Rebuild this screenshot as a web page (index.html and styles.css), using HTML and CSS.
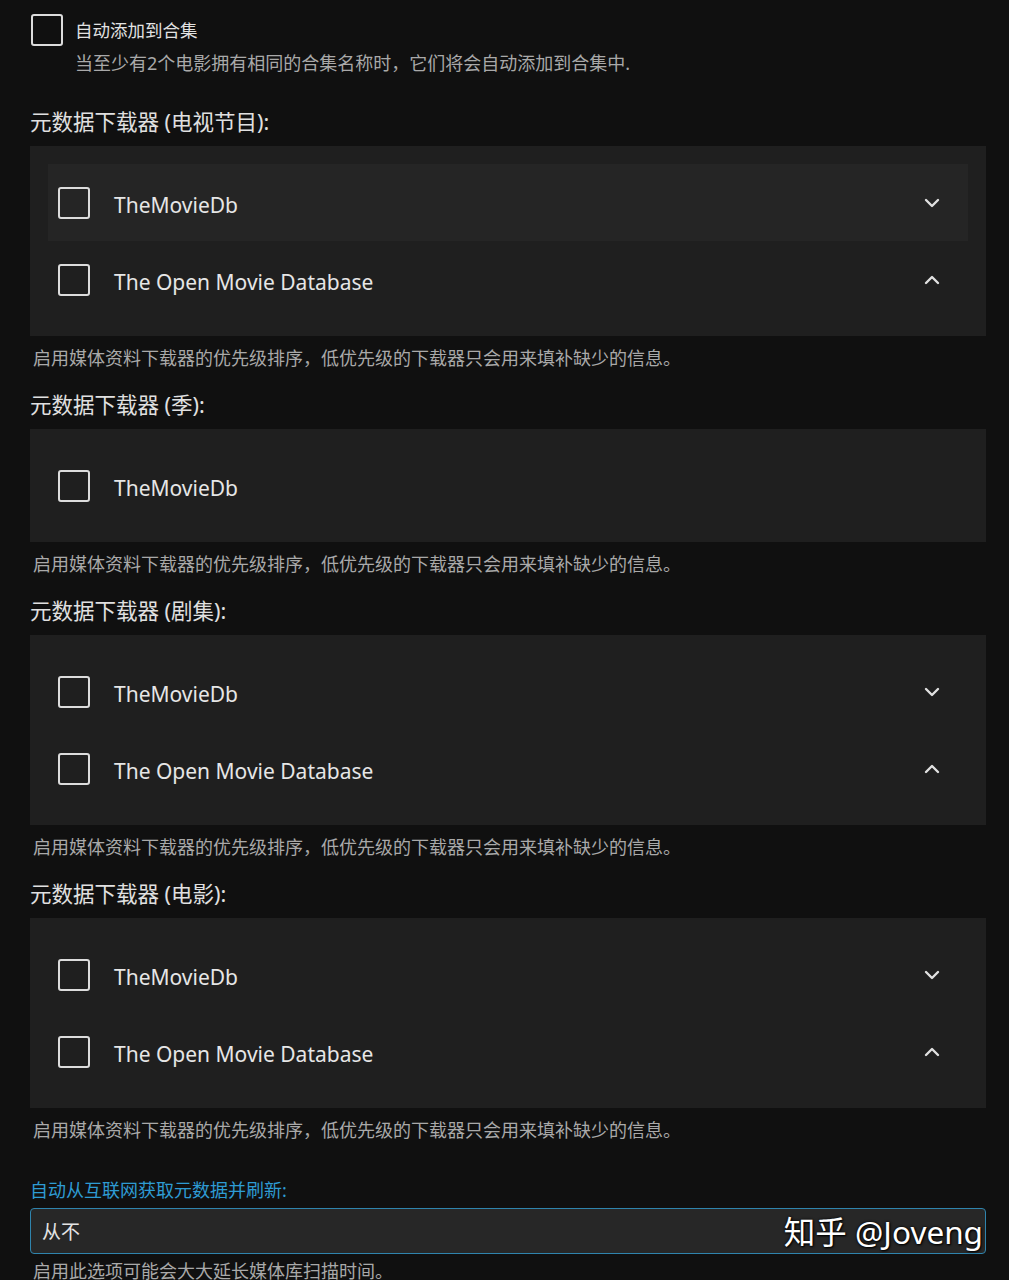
FILE: index.html
```html
<!DOCTYPE html>
<html lang="zh-CN">
<head>
  <meta charset="UTF-8">
  <meta name="viewport" content="width=device-width, initial-scale=1.0">
  <title>媒体库设置</title>
  <link rel="stylesheet" href="styles.css">
</head>
<body>
  <div class="page">
    <label class="check-row">
      <span class="box"></span>
      <span class="check-label">自动添加到合集</span>
    </label>
    <div class="check-desc">当至少有2个电影拥有相同的合集名称时，它们将会自动添加到合集中.</div>

    <div class="section">
      <h3 class="heading">元数据下载器 (电视节目):</h3>
      <div class="panel">
        <div class="item focused">
          <span class="box"></span>
          <span class="item-name">TheMovieDb</span>
          <svg class="chev" viewBox="0 0 16 10"><polyline points="2,2 8,8 14,2"/></svg>
        </div>
        <div class="item">
          <span class="box"></span>
          <span class="item-name">The Open Movie Database</span>
          <svg class="chev" viewBox="0 0 16 10"><polyline points="2,8 8,2 14,8"/></svg>
        </div>
      </div>
      <div class="help">启用媒体资料下载器的优先级排序，低优先级的下载器只会用来填补缺少的信息。</div>
    </div>

    <div class="section">
      <h3 class="heading">元数据下载器 (季):</h3>
      <div class="panel">
        <div class="item">
          <span class="box"></span>
          <span class="item-name">TheMovieDb</span>
        </div>
      </div>
      <div class="help">启用媒体资料下载器的优先级排序，低优先级的下载器只会用来填补缺少的信息。</div>
    </div>

    <div class="section">
      <h3 class="heading">元数据下载器 (剧集):</h3>
      <div class="panel">
        <div class="item">
          <span class="box"></span>
          <span class="item-name">TheMovieDb</span>
          <svg class="chev" viewBox="0 0 16 10"><polyline points="2,2 8,8 14,2"/></svg>
        </div>
        <div class="item">
          <span class="box"></span>
          <span class="item-name">The Open Movie Database</span>
          <svg class="chev" viewBox="0 0 16 10"><polyline points="2,8 8,2 14,8"/></svg>
        </div>
      </div>
      <div class="help">启用媒体资料下载器的优先级排序，低优先级的下载器只会用来填补缺少的信息。</div>
    </div>

    <div class="section">
      <h3 class="heading">元数据下载器 (电影):</h3>
      <div class="panel">
        <div class="item">
          <span class="box"></span>
          <span class="item-name">TheMovieDb</span>
          <svg class="chev" viewBox="0 0 16 10"><polyline points="2,2 8,8 14,2"/></svg>
        </div>
        <div class="item">
          <span class="box"></span>
          <span class="item-name">The Open Movie Database</span>
          <svg class="chev" viewBox="0 0 16 10"><polyline points="2,8 8,2 14,8"/></svg>
        </div>
      </div>
      <div class="help">启用媒体资料下载器的优先级排序，低优先级的下载器只会用来填补缺少的信息。</div>
    </div>

    <div class="field">
      <div class="field-label">自动从互联网获取元数据并刷新:</div>
      <div class="select">
        <span class="select-value">从不</span>
        <span class="watermark">知乎 @Joveng</span>
      </div>
      <div class="help">启用此选项可能会大大延长媒体库扫描时间。</div>
    </div>
  </div>
</body>
</html>
```

FILE: styles.css
```css
html, body {
  margin: 0;
  background: #101010;
}
body {
  font-family: "Noto Sans", "Noto Sans CJK SC", sans-serif;
  color: #e2e2e2;
  overflow: hidden;
}
.page {
  width: 956px;
  padding: 14px 0 0 30px;
}
.box {
  display: block;
  flex: none;
  width: 28px;
  height: 28px;
  border: 2px solid #dcdcdc;
  border-radius: 3px;
}
.check-row {
  display: flex;
  align-items: center;
  gap: 12px;
  padding-left: 1px;
}
.check-label {
  font-size: 17.5px;
  line-height: 26px;
}
.check-desc {
  margin: 4px 0 31px 45px;
  font-size: 18px;
  line-height: 26px;
  color: #a9a9a9;
}
.section {
  margin-bottom: 19px;
}
.heading {
  margin: 0 0 9px;
  font-size: 21.5px;
  font-weight: normal;
  line-height: 30px;
  color: #e0e0e0;
}
.panel {
  background: #1f1f1f;
  padding: 18px;
}
.item {
  display: flex;
  align-items: center;
  height: 77px;
  padding: 0 28px 0 10px;
}
.item.focused {
  background: #252525;
}
.item-name {
  flex: 1;
  margin-left: 24px;
  padding-top: 4px;
  font-size: 21px;
  color: #e6e6e6;
}
.chev {
  width: 16px;
  height: 10px;
  fill: none;
  stroke: #e0e0e0;
  stroke-width: 2.4;
  stroke-linecap: round;
  stroke-linejoin: round;
}
.help {
  margin-top: 9px;
  padding-left: 3px;
  font-size: 18px;
  line-height: 26px;
  color: #a9a9a9;
}
.field {
  padding-top: 16px;
}
.field-label {
  margin-bottom: 6px;
  font-size: 18px;
  line-height: 24px;
  color: #2e9bd3;
}
.select {
  position: relative;
  display: flex;
  align-items: center;
  height: 44px;
  padding: 0 11px;
  background: #272727;
  border: 1.5px solid #2f84ad;
  border-radius: 4px;
}
.select-value {
  font-size: 19px;
  color: #e4e4e4;
}
.select + .help {
  margin-top: 4px;
}
.watermark {
  position: absolute;
  right: 2px;
  top: 50%;
  transform: translateY(-52%);
  font-size: 31.5px;
  color: #fff;
  text-shadow: 0 0 3px #000, 1px 1px 2px #000;
}
```
